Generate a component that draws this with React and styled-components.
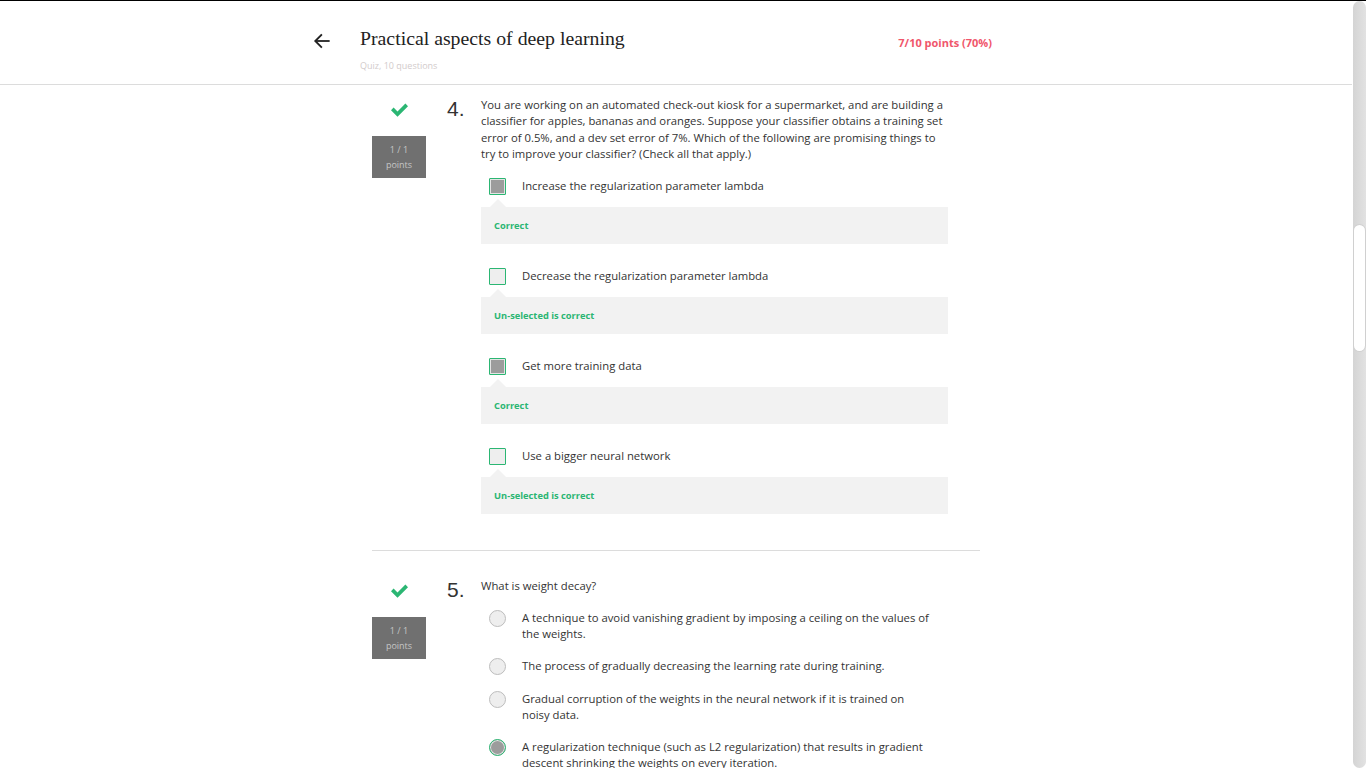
import React from "react";
import styled, { createGlobalStyle } from "styled-components";

const GlobalStyle = createGlobalStyle`
  html, body {
    margin: 0;
    padding: 0;
    height: 100%;
    overflow: hidden;
    background: #fff;
  }
  body {
    border-top: 1px solid #000;
    box-sizing: border-box;
    font-family: "Open Sans", "Liberation Sans", sans-serif;
    color: #333;
  }
`;

const Shell = styled.div`
  display: flex;
  height: 767px;
`;

const Main = styled.div`
  flex: 1;
  display: flex;
  flex-direction: column;
  overflow: hidden;
`;

const Header = styled.header`
  flex: none;
  height: 83px;
  border-bottom: 1px solid #dcdcdc;
  display: flex;
  justify-content: center;
`;

const HeaderInner = styled.div`
  width: 752px;
  box-sizing: border-box;
  padding: 0 60px 0 12px;
  display: flex;
  align-items: flex-start;
`;

const BackButton = styled.div`
  width: 20px;
  height: 20px;
  margin-top: 30px;
  margin-right: 28px;
  display: flex;
  align-items: center;
  justify-content: center;
`;

const TitleBlock = styled.div`
  flex: 1;
  padding-top: 24px;
`;

const Title = styled.h1`
  margin: 0;
  font-family: "Liberation Serif", "Times New Roman", serif;
  font-weight: normal;
  font-size: 19.8px;
  line-height: 26px;
  color: #222;
`;

const Subtitle = styled.div`
  margin-top: 8px;
  font-size: 9px;
  color: #d2cbcb;
`;

const Score = styled.div`
  margin-top: 34px;
  font-size: 11px;
  font-weight: 700;
  color: #f0566b;
`;

const Content = styled.div`
  flex: none;
  width: 608px;
  margin: 0 auto;
`;

const Question = styled.section`
  display: flex;
  padding: ${(p) => (p.$first ? "12px" : "27px")} 32px 36px 0;
  border-top: ${(p) => (p.$first ? "none" : "1px solid #dcdcdc")};
`;

const Side = styled.div`
  width: 54px;
  display: flex;
  flex-direction: column;
  align-items: center;
`;

const CheckMark = styled.div`
  height: 16px;
  margin-top: 3px;
  margin-bottom: 20px;
`;

const PointsBox = styled.div`
  width: 54px;
  height: 42px;
  background: #707070;
  color: #c6c6c6;
  font-size: 9px;
  line-height: 15px;
  display: flex;
  flex-direction: column;
  align-items: center;
  justify-content: center;
`;

const Number = styled.div`
  width: 34px;
  margin-left: 21px;
  padding-top: 1px;
  font-family: "Liberation Sans", Arial, sans-serif;
  font-size: 21px;
  line-height: 22px;
  color: #333;
`;

const Body = styled.div`
  flex: 1;
`;

const Prompt = styled.p`
  margin: 0;
  font-size: 11.3px;
  line-height: 16.3px;
  color: #333;
`;

const Options = styled.div`
  margin-top: 16px;
  display: flex;
  flex-direction: column;
  gap: ${(p) => (p.$radio ? "16px" : "24px")};
`;

const Option = styled.div`
  display: flex;
  flex-direction: column;
`;

const OptionRow = styled.div`
  display: flex;
  align-items: flex-start;
  padding-left: 8px;
`;

const Box = styled.span`
  flex: none;
  width: 17px;
  height: 17px;
  box-sizing: border-box;
  border: 1px solid ${(p) => (p.$plain ? "#bdbdbd" : "#2bb673")};
  border-radius: ${(p) => (p.$radio ? "50%" : "1px")};
  background: ${(p) => (p.$checked ? "#9c9c9c" : "#eeeeee")};
  box-shadow: ${(p) => (p.$checked ? "inset 0 0 0 1px #e4e4e4" : "none")};
`;

const Label = styled.span`
  margin-left: 16px;
  width: 410px;
  font-size: 11.3px;
  line-height: 16px;
  color: #333;
`;

const Feedback = styled.div`
  position: relative;
  margin-top: 12px;
  height: 37px;
  background: #f2f2f2;
  padding-left: 13px;
  display: flex;
  align-items: center;
  font-size: 9.3px;
  font-weight: 700;
  color: #2bb673;

  &::before {
    content: "";
    position: absolute;
    left: 9px;
    top: -8px;
    border-left: 8px solid transparent;
    border-right: 8px solid transparent;
    border-bottom: 8px solid #f2f2f2;
  }
`;

const ScrollTrack = styled.div`
  width: 14px;
  background: #fff;
  display: flex;
  justify-content: center;
`;

const Rail = styled.div`
  width: 13px;
  border-radius: 7px;
  background: linear-gradient(to right, #d4d4d4, #e2e2e2);
  display: flex;
  flex-direction: column;
`;

const Thumb = styled.div`
  margin-top: 224px;
  margin-left: 1px;
  width: 11px;
  height: 126px;
  background: #fff;
  border-radius: 6px;
  box-shadow: 0 0 0 1px #d0d0d0;
`;

const Arrow = () => (
  <svg width="18" height="18" viewBox="0 0 24 24" fill="none" stroke="#222" strokeWidth="2.4" strokeLinecap="square">
    <path d="M21 12H4" />
    <path d="M11 4l-8 8 8 8" />
  </svg>
);

const Tick = () => (
  <svg width="19" height="15" viewBox="0 0 19 15">
    <path d="M1 8.2l2.6-2.6 3.9 3.9L15.4 1.6 18 4.2 7.5 14.7z" fill="#2bb673" />
  </svg>
);

const q4Options = [
  { text: "Increase the regularization parameter lambda", checked: true, note: "Correct" },
  { text: "Decrease the regularization parameter lambda", checked: false, note: "Un-selected is correct" },
  { text: "Get more training data", checked: true, note: "Correct" },
  { text: "Use a bigger neural network", checked: false, note: "Un-selected is correct" },
];

const q5Options = [
  { text: "A technique to avoid vanishing gradient by imposing a ceiling on the values of the weights.", checked: false },
  { text: "The process of gradually decreasing the learning rate during training.", checked: false },
  { text: "Gradual corruption of the weights in the neural network if it is trained on noisy data.", checked: false },
  {
    text: "A regularization technique (such as L2 regularization) that results in gradient descent shrinking the weights on every iteration.",
    checked: true,
  },
];

function SideColumn() {
  return (
    <Side>
      <CheckMark>
        <Tick />
      </CheckMark>
      <PointsBox>
        <span>1 / 1</span>
        <span>points</span>
      </PointsBox>
    </Side>
  );
}

export default function App() {
  return (
    <>
      <GlobalStyle />
      <Shell>
        <Main>
          <Header>
            <HeaderInner>
              <BackButton>
                <Arrow />
              </BackButton>
              <TitleBlock>
                <Title>Practical aspects of deep learning</Title>
                <Subtitle>Quiz, 10 questions</Subtitle>
              </TitleBlock>
              <Score>7/10 points (70%)</Score>
            </HeaderInner>
          </Header>
          <Content>
            <Question $first>
              <SideColumn />
              <Number>4.</Number>
              <Body>
                <Prompt>
                  You are working on an automated check-out kiosk for a supermarket, and are building a
                  classifier for apples, bananas and oranges. Suppose your classifier obtains a training set
                  error of 0.5%, and a dev set error of 7%. Which of the following are promising things to
                  try to improve your classifier? (Check all that apply.)
                </Prompt>
                <Options>
                  {q4Options.map((o) => (
                    <Option key={o.text}>
                      <OptionRow>
                        <Box $checked={o.checked} />
                        <Label>{o.text}</Label>
                      </OptionRow>
                      <Feedback>{o.note}</Feedback>
                    </Option>
                  ))}
                </Options>
              </Body>
            </Question>
            <Question>
              <SideColumn />
              <Number>5.</Number>
              <Body>
                <Prompt>What is weight decay?</Prompt>
                <Options $radio>
                  {q5Options.map((o) => (
                    <OptionRow key={o.text}>
                      <Box $radio $plain={!o.checked} $checked={o.checked} />
                      <Label>{o.text}</Label>
                    </OptionRow>
                  ))}
                </Options>
              </Body>
            </Question>
          </Content>
        </Main>
        <ScrollTrack>
          <Rail>
            <Thumb />
          </Rail>
        </ScrollTrack>
      </Shell>
    </>
  );
}
